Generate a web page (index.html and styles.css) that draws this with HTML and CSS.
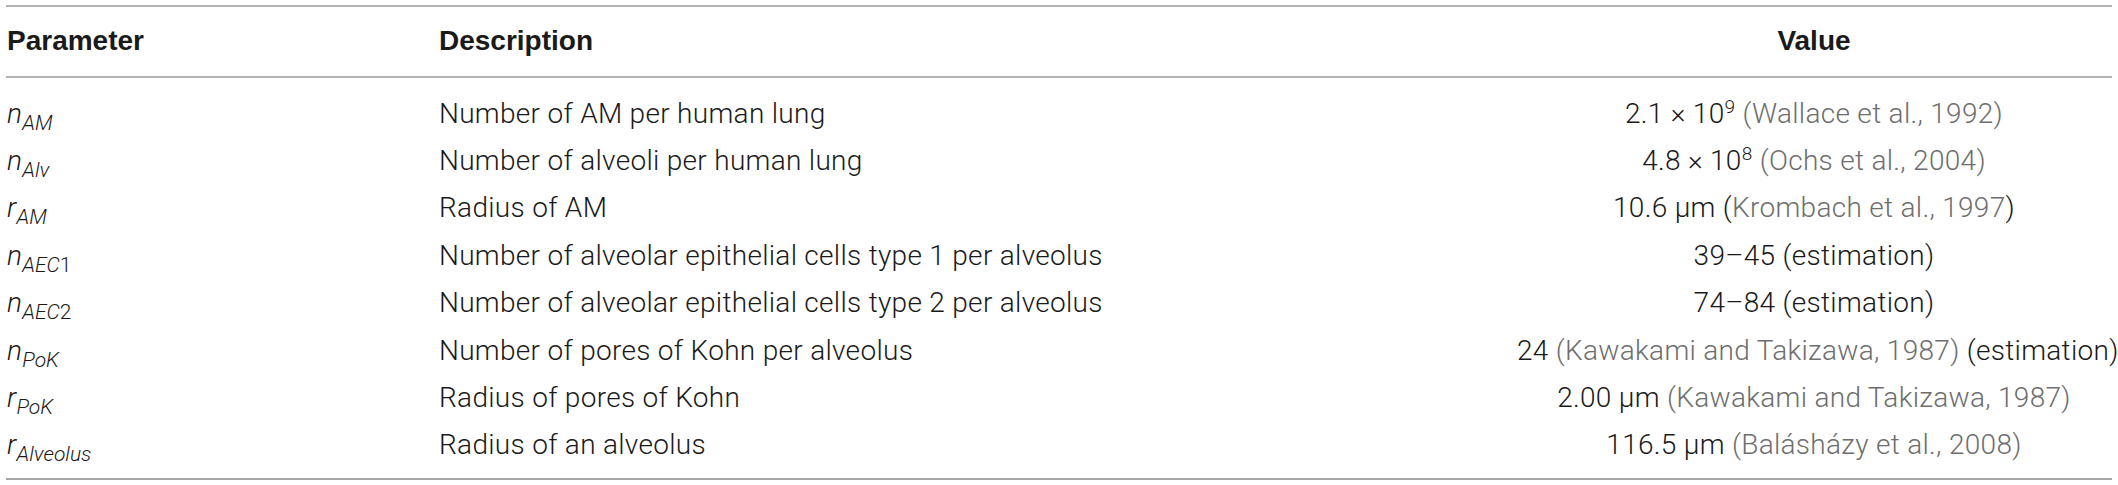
FILE: index.html
```html
<!DOCTYPE html>
<html lang="en">
<head>
<meta charset="utf-8">
<title>Model parameters</title>
<link rel="stylesheet" href="styles.css">
</head>
<body>
<table class="params">
  <colgroup>
    <col class="c-param">
    <col class="c-desc">
    <col class="c-val">
  </colgroup>
  <thead>
    <tr>
      <th class="h-left">Parameter</th>
      <th class="h-left">Description</th>
      <th class="h-center">Value</th>
    </tr>
  </thead>
  <tbody>
    <tr class="first">
      <td><span class="sym">n</span><sub class="idx">AM</sub></td>
      <td>Number of AM per human lung</td>
      <td class="val">2.1 × 10<sup class="exp">9</sup> <span class="cite">(Wallace et al., 1992)</span></td>
    </tr>
    <tr>
      <td><span class="sym">n</span><sub class="idx">Alv</sub></td>
      <td>Number of alveoli per human lung</td>
      <td class="val">4.8 × 10<sup class="exp">8</sup> <span class="cite">(Ochs et al., 2004)</span></td>
    </tr>
    <tr>
      <td><span class="sym">r</span><sub class="idx">AM</sub></td>
      <td>Radius of AM</td>
      <td class="val">10.6 μm (<span class="cite">Krombach et al., 1997</span>)</td>
    </tr>
    <tr>
      <td><span class="sym">n</span><sub class="idx">AEC<span class="up">1</span></sub></td>
      <td>Number of alveolar epithelial cells type 1 per alveolus</td>
      <td class="val">39–45 (estimation)</td>
    </tr>
    <tr>
      <td><span class="sym">n</span><sub class="idx">AEC<span class="up">2</span></sub></td>
      <td>Number of alveolar epithelial cells type 2 per alveolus</td>
      <td class="val">74–84 (estimation)</td>
    </tr>
    <tr>
      <td><span class="sym">n</span><sub class="idx">PoK</sub></td>
      <td>Number of pores of Kohn per alveolus</td>
      <td class="val">24 <span class="cite">(Kawakami and Takizawa, 1987)</span> (estimation)</td>
    </tr>
    <tr>
      <td><span class="sym">r</span><sub class="idx">PoK</sub></td>
      <td>Radius of pores of Kohn</td>
      <td class="val">2.00 μm <span class="cite">(Kawakami and Takizawa, 1987)</span></td>
    </tr>
    <tr class="last">
      <td><span class="sym">r</span><sub class="idx">Alveolus</sub></td>
      <td>Radius of an alveolus</td>
      <td class="val">116.5 μm <span class="cite">(Balásházy et al., 2008)</span></td>
    </tr>
  </tbody>
</table>
</body>
</html>
```
FILE: styles.css
```css
html, body {
  margin: 0;
  padding: 0;
  background: #ffffff;
}

body {
  font-family: Roboto, "Liberation Sans", Arial, sans-serif;
  font-weight: 300;
  color: #1a1a1a;
}

.params {
  margin: 5px 0 0 6px;
  width: 2106px;
  table-layout: fixed;
  border-collapse: separate;
  border-spacing: 0;
  font-size: 28px;
}

.c-param { width: 432px; }
.c-desc { width: 1078px; }
.c-val { width: 596px; }

.params th {
  font-family: "Liberation Sans", Arial, sans-serif;
  font-weight: bold;
  line-height: 34px;
  padding: 17px 1px 18px;
  border-top: 2px solid #b2b2b2;
  border-bottom: 2px solid #b2b2b2;
  color: #1a1a1a;
  white-space: nowrap;
}

.h-left { text-align: left; }
.h-center { text-align: center; }

.params td {
  line-height: 47.4px;
  padding: 0 1px;
  white-space: nowrap;
  vertical-align: baseline;
  letter-spacing: 0.3px;
}

.params tr.first td { padding-top: 11.6px; }
.params tr.last td {
  padding-bottom: 9px;
  border-bottom: 2px solid #a6a6a6;
}

.val { text-align: center; }

.sym { font-style: italic; }

.idx {
  font-style: italic;
  font-size: 21px;
  line-height: 0;
  vertical-align: -7px;
  letter-spacing: 0;
}

.up { font-style: normal; }

.exp {
  font-size: 19px;
  line-height: 0;
  vertical-align: 10px;
}

.cite { color: #6e6e6e; }
```
